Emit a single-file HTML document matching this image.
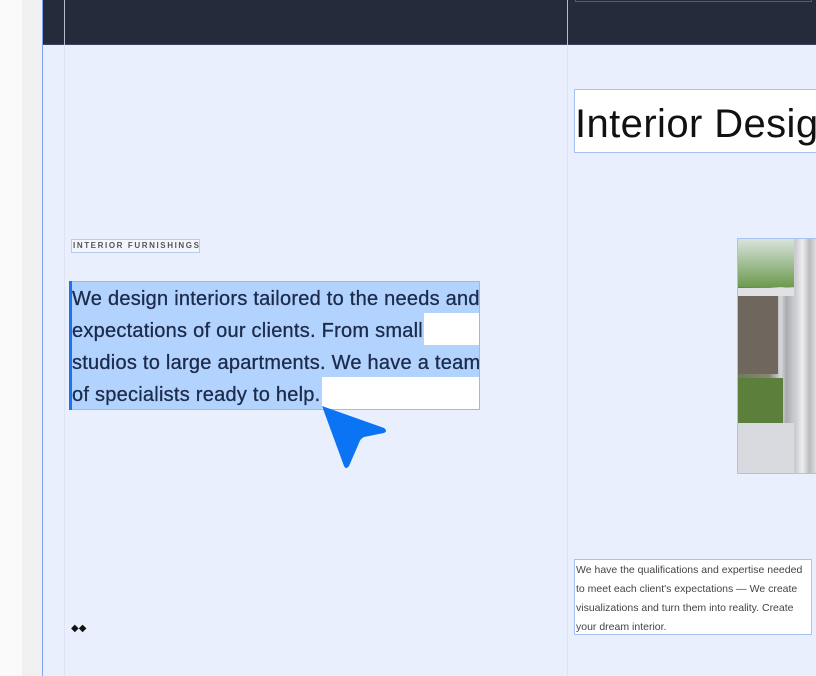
<!DOCTYPE html>
<html><head><style>
*{margin:0;padding:0;box-sizing:border-box}
body{width:816px;height:676px;overflow:hidden;position:relative;background:#e9effd;font-family:"Liberation Sans",sans-serif}
.a{position:absolute}
</style></head><body>
<div class="a" style="left:0;top:0;width:22px;height:676px;background:#fafafa"></div>
<div class="a" style="left:22px;top:0;width:20px;height:676px;background:#f0f0f0"></div>
<div class="a" style="left:42px;top:0;width:1px;height:676px;background:#7ea4f2"></div>
<div class="a" style="left:43px;top:0;width:773px;height:45px;background:#252b3a;border-bottom:1px solid #3a4660"></div>
<div class="a" style="left:64px;top:0;width:1px;height:676px;background:#d8e0f2;opacity:.8"></div>
<div class="a" style="left:567px;top:0;width:1px;height:676px;background:#d8e0f2;opacity:.8"></div>
<div class="a" style="left:575px;top:0;width:237px;height:2px;border:1px solid #3d5fb0;border-top:none"></div>
<div class="a" style="left:574px;top:89px;width:250px;height:64px;background:#fff;border:1px solid #a9c2f5;font-size:40px;letter-spacing:0.4px;color:#111;line-height:68px;white-space:nowrap;overflow:hidden">Interior Desig</div>
<div class="a" style="left:71px;top:239px;width:129px;height:14px;border:1px solid #b9cbf0;background:#f2f5fc;font-size:8px;letter-spacing:1.6px;color:#555;line-height:12px;font-weight:bold;padding-left:1px;white-space:nowrap">INTERIOR FURNISHINGS</div>
<div class="a" style="left:69px;top:281px;width:411px;height:129px;background:#b3d3ff;border:1px solid #98b9f2"></div>
<div class="a" style="left:424px;top:313px;width:55px;height:32px;background:#fff"></div>
<div class="a" style="left:322px;top:377px;width:157px;height:32px;background:#fff"></div>
<div class="a" style="left:69px;top:281px;width:3px;height:129px;background:#1a73f0"></div>
<div class="a" style="left:72px;top:283px;width:410px;font-size:20px;letter-spacing:0.25px;line-height:32px;color:#1c2b4a;white-space:nowrap;-webkit-text-stroke:0.3px #1c2b4a">We design interiors tailored to the needs and<br>expectations of our clients. From small<br>studios to large apartments. We have a team<br>of specialists ready to help.</div>
<svg class="a" style="left:318px;top:402px" width="72" height="70"><path d="M4 4 L66 26 Q70 29 66 31 L46 35 Q42 37 41 41 L31 64 Q28 68 26 64 Z" fill="#0a74f5"/></svg>
<div class="a" style="left:737px;top:238px;width:80px;height:236px;border:1px solid #a9c2f5;background:linear-gradient(90deg,#6c7d5a 0%,#8c8578 40%,#d6d8dc 55%,#a9abb0 62%,#e5e6e8 80%,#c8c9cc 100%)"></div>
<div class="a" style="left:738px;top:239px;width:56px;height:48px;background:linear-gradient(#d8e4dc,#6e9a4f)"></div>
<div class="a" style="left:738px;top:288px;width:56px;height:8px;background:#dfe1e4"></div>
<div class="a" style="left:738px;top:296px;width:40px;height:78px;background:#6f665e"></div>
<div class="a" style="left:738px;top:378px;width:45px;height:45px;background:#5c7f3c"></div>
<div class="a" style="left:738px;top:423px;width:56px;height:50px;background:#d8dadf"></div>
<div class="a" style="left:795px;top:239px;width:22px;height:234px;background:linear-gradient(90deg,#c8c9cd,#eeeeef,#b9babe,#e4e5e7)"></div>
<div class="a" style="left:574px;top:559px;width:238px;height:76px;background:#fff;border:1px solid #a9c2f5;font-size:10.5px;line-height:19px;color:#444;padding-left:1px;padding-top:1px;white-space:nowrap">We have the qualifications and expertise needed<br>to meet each client's expectations — We create<br>visualizations and turn them into reality. Create<br>your dream interior.</div>
<div class="a" style="left:71px;top:623px;font-size:10px;color:#111">◆◆</div>
</body></html>
